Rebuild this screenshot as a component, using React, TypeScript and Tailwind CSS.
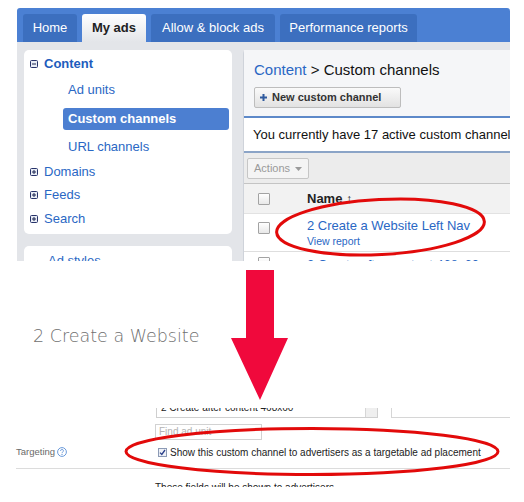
function Box({ plus }: { plus?: boolean }) {
  return (
    <svg width="8" height="8" viewBox="0 0 8 8" className="shrink-0">
      <rect x="0.5" y="0.5" width="7" height="7" rx="1" fill="#e9edf5" stroke="#27336a" />
      <path d="M2 4h4" stroke="#1b2550" />
      {plus && <path d="M4 2v4" stroke="#1b2550" />}
    </svg>
  );
}

function Check() {
  return (
    <div className="w-[12px] h-[12px] shrink-0 border border-[#a3a3a3] rounded-[1px] bg-gradient-to-b from-white to-[#e8e8e8]" />
  );
}

function TopShot() {
  return (
    <div className="ml-[17px] mt-[8px] w-[493px] h-[253px] overflow-hidden">
      {/* tabs */}
      <div className="h-[34px] bg-[#4b80d3] rounded-t-[3px] flex items-end pl-[6px] gap-[5px] text-[13px]">
        <div className="w-[54px] h-[28px] rounded-t-[3px] bg-[#3c6fbf] text-white flex items-center justify-center">Home</div>
        <div className="w-[64px] h-[28px] rounded-t-[3px] bg-gradient-to-b from-white to-[#e3e5e9] text-[#222] font-bold flex items-center justify-center">My ads</div>
        <div className="w-[124px] h-[28px] rounded-t-[3px] bg-[#3c6fbf] text-white flex items-center justify-center">Allow &amp; block ads</div>
        <div className="w-[137px] h-[28px] rounded-t-[3px] bg-[#3c6fbf] text-white flex items-center justify-center">Performance reports</div>
      </div>

      <div className="h-[219px] bg-[#e3e5e9] flex pl-[7px] pt-[8px] gap-[11px] overflow-hidden">
        {/* left nav */}
        <div className="w-[208px] shrink-0 flex flex-col gap-[12px]">
          <div className="shrink-0 bg-white rounded-[5px] h-[184px] pt-[4px] text-[13px] text-[#2a67c4]">
            <div className="h-[20px] flex items-center gap-[6px] pl-[6px] font-bold text-[#1d5cbd]">
              <Box />
              <span>Content</span>
            </div>
            <div className="h-[20px] mt-[6px] flex items-center pl-[44px]">Ad units</div>
            <div className="h-[22px] mt-[8px] ml-[39px] mr-[3px] rounded-[3px] bg-[#4c7fd1] text-white font-bold flex items-center pl-[5px]">
              Custom channels
            </div>
            <div className="h-[20px] mt-[7px] flex items-center pl-[44px]">URL channels</div>
            <div className="h-[20px] mt-[5px] flex items-center gap-[6px] pl-[6px]">
              <Box plus />
              <span>Domains</span>
            </div>
            <div className="h-[20px] mt-[3px] flex items-center gap-[6px] pl-[6px]">
              <Box plus />
              <span>Feeds</span>
            </div>
            <div className="h-[20px] mt-[4px] flex items-center gap-[6px] pl-[6px]">
              <Box plus />
              <span>Search</span>
            </div>
          </div>
          <div className="shrink-0 bg-white rounded-[5px] h-[40px] pl-[24px] pt-[7px] text-[13px] leading-[16px] text-[#2a67c4]">Ad styles</div>
        </div>

        {/* main panel */}
        <div className="flex-1 min-w-0 bg-white rounded-tl-[4px] border-l border-[#cfd3da] flex flex-col whitespace-nowrap">
          <div className="shrink-0 h-[66px] bg-[#f5f6f8] pl-[10px] pt-[11px]">
            <div className="h-[18px] leading-[18px] text-[15px] text-[#111]">
              <span className="text-[#2a67c4]">Content</span> &gt; Custom channels
            </div>
            <div className="mt-[8px] h-[21px] w-[147px] border border-[#bdbdbd] rounded-[2px] bg-gradient-to-b from-[#fafafa] to-[#e2e2e2] flex items-center gap-[4px] pl-[4px] text-[11px] font-bold text-[#333]">
              <svg width="9" height="9" viewBox="0 0 9 9">
                <path d="M4.5 1v7M1 4.5h7" stroke="#2f5a9e" strokeWidth="2" />
              </svg>
              New custom channel
            </div>
          </div>
          <div className="shrink-0 h-[2px] bg-[#5d89c9]" />
          <div className="shrink-0 h-[33px] pl-[9px] flex items-center text-[13px] text-[#111]">
            You currently have 17 active custom channels
          </div>
          <div className="shrink-0 h-[2px] bg-[#8ba4c7]" />
          <div className="shrink-0 h-[30px] bg-[#ececec] pl-[3px] pt-[5px]">
            <div className="h-[21px] w-[62px] border border-[#c6c6c6] rounded-[2px] bg-[#f4f4f4] flex items-center gap-[5px] pl-[6px] text-[11px] text-[#9a9a9a]">
              Actions
              <svg width="7" height="4" viewBox="0 0 7 4">
                <path d="M0 0h7L3.5 4z" fill="#9a9a9a" />
              </svg>
            </div>
          </div>
          <div className="shrink-0 h-[1px] bg-[#c4c4c4]" />
          <div className="shrink-0 h-[30px] bg-[#f2f2f2] flex items-center pl-[14px] border-b border-[#e2e2e2]">
            <Check />
            <span className="ml-[37px] text-[13px] font-bold text-[#222]">Name ↑</span>
          </div>
          <div className="shrink-0 h-[38px] flex items-start pl-[14px] pt-[4px] border-b border-[#dedede]">
            <div className="mt-[4px]">
              <Check />
            </div>
            <div className="ml-[37px] flex flex-col">
              <span className="text-[13px] leading-[16px] text-[#2a67c4]">2 Create a Website Left Nav</span>
              <span className="text-[10.5px] leading-[14px] text-[#2a67c4]">View report</span>
            </div>
          </div>
          <div className="shrink-0 flex items-start pl-[14px] pt-[5px]">
            <Check />
            <span className="ml-[37px] text-[13px] leading-[16px] text-[#2a67c4]">2 Create after content 468x60</span>
          </div>
        </div>
      </div>
    </div>
  );
}

function BottomShot() {
  return (
    <div className="mt-[62px] h-[79px] w-[510px] overflow-hidden pl-[16px] text-[10px] text-[#222] whitespace-nowrap">
      <div className="flex h-[10px]">
        <div className="ml-[140px] w-[222px] h-[10px] border-b border-x border-[#cfcfcf] overflow-hidden flex">
          <div className="flex-1 pl-[4px] -mt-[6px] leading-[12px]">2 Create after content 468x60</div>
          <div className="w-[12px] bg-[#efefef] border-l border-[#d6d6d6]" />
        </div>
        <div className="ml-[13px] flex-1 border-l border-b border-[#d6d6d6]" />
      </div>

      <div className="mt-[6px] ml-[139px] w-[107px] h-[16px] border border-[#d2d2d2] pl-[3px] leading-[14px] text-[#b4b4b4]">
        Find ad unit
      </div>

      <div className="mt-[6px] h-[12px] flex items-center">
        <span className="w-[41px] text-[9.5px] text-[#6a6a6a]">Targeting</span>
        <svg width="10" height="10" viewBox="0 0 10 10">
          <circle cx="5" cy="5" r="4.4" fill="none" stroke="#5a8ed6" strokeWidth="0.9" />
          <path d="M3.6 3.9a1.4 1.4 0 1 1 2 1.2c-.5.3-.6.5-.6 1" fill="none" stroke="#5a8ed6" strokeWidth="0.9" />
          <circle cx="5" cy="7.4" r="0.55" fill="#5a8ed6" />
        </svg>
        <div className="ml-[91px] w-[9px] h-[9px] border border-[#8c9ab5] bg-[#eef1f7] flex items-center justify-center">
          <svg width="7" height="7" viewBox="0 0 7 7">
            <path d="M1 3.6l1.8 1.9L6 1" fill="none" stroke="#2a3f8a" strokeWidth="1.3" />
          </svg>
        </div>
        <span className="ml-[3px]">Show this custom channel to advertisers as a targetable ad placement</span>
      </div>

      <div className="mt-[10px] h-[1px] bg-[#dcdcdc]" />

      <div className="mt-[13px] ml-[139px] leading-[12px]">These fields will be shown to advertisers</div>
    </div>
  );
}

export default function App() {
  return (
    <div className="relative w-[524px] h-[502px] overflow-hidden bg-white font-['Liberation_Sans',Arial,sans-serif]">
      <TopShot />
      <div className="pl-[33px] mt-[65px] h-[20px] leading-[20px] text-[17.5px] text-[#6f6f6f] font-['DejaVu_Sans',sans-serif] font-light">
        2 Create a Website
      </div>
      <BottomShot />
      <svg className="absolute left-0 top-0 pointer-events-none" width="524" height="502">
        <polygon points="246,270 274,270 274,338 288,338 260,400 231,338 246,338" fill="#f0093c" />
        <ellipse cx="380.5" cy="227" rx="104" ry="27.5" transform="rotate(-3 380.5 227)" fill="none" stroke="#e20a0a" strokeWidth="3" />
        <ellipse cx="312" cy="451.5" rx="186" ry="23" fill="none" stroke="#e20a0a" strokeWidth="3" />
      </svg>
    </div>
  );
}
